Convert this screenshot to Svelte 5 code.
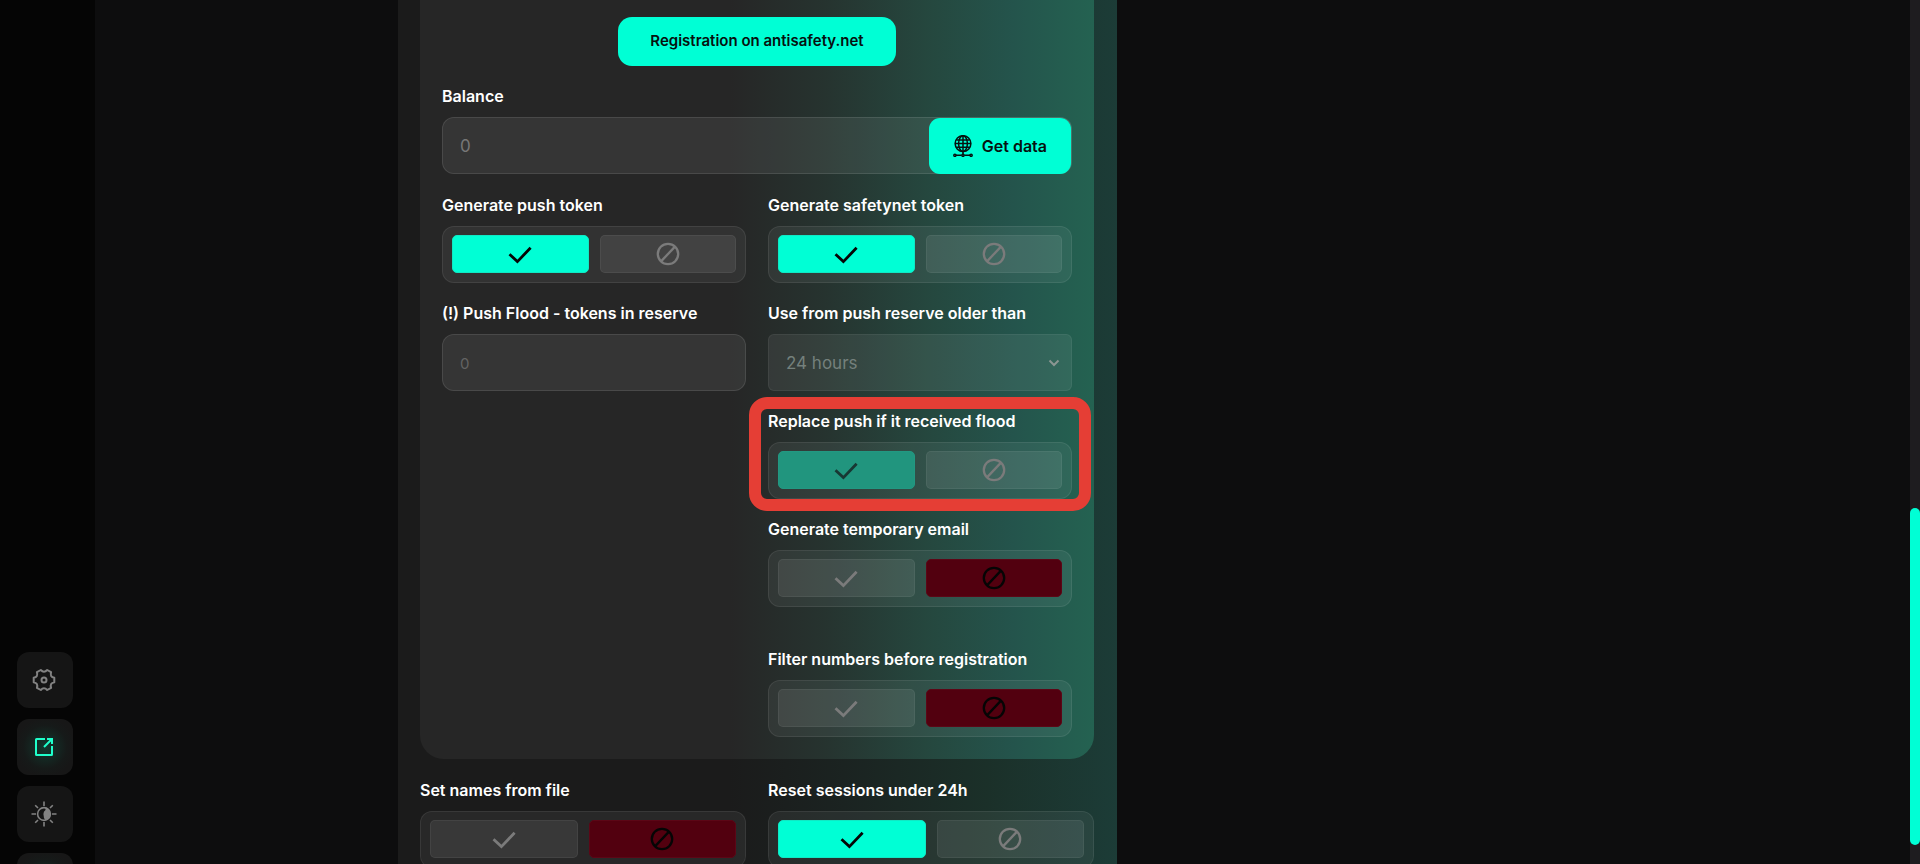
<script>
  let cardFields = $state([
    { id: "push-token", label: "Generate push token", type: "toggle", on: true },
    { id: "safetynet-token", label: "Generate safetynet token", type: "toggle", on: true },
    { id: "push-reserve", label: "(!) Push Flood - tokens in reserve", type: "number" },
    { id: "reserve-age", label: "Use from push reserve older than", type: "select" },
    { id: "replace-push", label: "Replace push if it received flood", type: "toggle", on: true, right: true, marked: true },
    { id: "temp-email", label: "Generate temporary email", type: "toggle", on: false, right: true },
    { id: "filter-numbers", label: "Filter numbers before registration", type: "toggle", on: false, right: true, spaced: true },
  ]);

  let panelFields = $state([
    { id: "names-file", label: "Set names from file", type: "toggle", on: false },
    { id: "reset-sessions", label: "Reset sessions under 24h", type: "toggle", on: true },
  ]);
</script>

{#snippet toggle(field)}
  <div class="field" class:right={field.right} class:spaced={field.spaced} class:marked={field.marked}>
    <span class="label" id="{field.id}-label">{field.label}</span>
    <div class="toggle" role="radiogroup" aria-labelledby="{field.id}-label">
      <label class="option yes">
        <input type="radio" name={field.id} checked={field.on} onchange={() => (field.on = true)} aria-label="On" />
        <svg width="24" height="24" viewBox="0 0 24 24" fill="none" stroke="currentColor" stroke-width="2.8">
          <path d="M1.5 12.2 9.4 19.6 22.6 5.8" />
        </svg>
      </label>
      <label class="option no">
        <input type="radio" name={field.id} checked={!field.on} onchange={() => (field.on = false)} aria-label="Off" />
        <svg width="24" height="24" viewBox="0 0 24 24" fill="none" stroke="currentColor" stroke-width="2.3">
          <circle cx="12" cy="12" r="10.2" />
          <path d="M5 19.4 19 4.6" />
        </svg>
      </label>
    </div>
  </div>
{/snippet}

<div class="app">
  <nav class="sidebar">
    <button class="nav-button" aria-label="Settings">
      <svg width="24" height="24" viewBox="0 0 24 24" fill="none" stroke="currentColor" stroke-width="2" stroke-linejoin="round">
        <path d="M22.3 9.8V14.2Q17.6 15.2 19.1 19.8L15.2 22Q12 18.5 8.8 22L4.9 19.8Q6.4 15.2 1.7 14.2V9.8Q6.4 8.8 4.9 4.2L8.8 2Q12 5.5 15.2 2L19.1 4.2Q17.6 8.8 22.3 9.8Z" />
        <circle cx="12" cy="12" r="2.5" />
      </svg>
    </button>
    <button class="nav-button active" aria-label="Registration">
      <svg width="20" height="20" viewBox="0 0 20 20" fill="none" stroke="currentColor" stroke-width="2">
        <path d="M11 2H2.5Q2 2 2 2.5V17.5Q2 18 2.5 18H17.5Q18 18 18 17.5V9" />
        <path d="M13 2H18V7M18 2 10 10" />
      </svg>
    </button>
    <button class="nav-button" aria-label="Theme">
      <svg width="26" height="26" viewBox="0 0 26 26" fill="none" stroke="currentColor" stroke-width="1.6">
        <circle cx="13" cy="13" r="6.4" />
        <path d="M14.5 6.6A6.6 6.6 0 0 1 14.5 19.4Q12.4 17 12.4 13Q12.4 10.5 14.5 9Z" fill="currentColor" stroke="none" />
        <path d="M13 .5V5M13 21V25.5M.5 13H5M21 13H25.5M4.2 4.2 7 7M19 19 21.8 21.8M4.2 21.8 7 19M19 7 21.8 4.2" />
      </svg>
    </button>
    <button class="nav-button active" aria-label="More"></button>
  </nav>

  <main>
    <div class="panel">
      <section class="card">
        <a class="register" href="https://antisafety.net">Registration on antisafety.net</a>

        <div class="field">
          <label class="label" for="balance">Balance</label>
          <div class="balance">
            <input id="balance" placeholder="0" />
            <button class="get-data">
              <svg width="20" height="22" viewBox="0 0 20 22" fill="none" stroke="currentColor" stroke-width="1.5">
                <circle cx="10" cy="8.6" r="7.9" />
                <ellipse cx="10" cy="8.6" rx="4.4" ry="7.9" />
                <path d="M10 1V19M2 8.6H18M3.4 5H16.6M3.4 12.2H16.6M3 20.3H8.600M11.400 20.3H17" />
                <circle cx="1.9" cy="20.3" r="1.1" />
                <circle cx="10" cy="20.3" r="1.1" />
                <circle cx="18.1" cy="20.3" r="1.1" />
              </svg>
              Get data
            </button>
          </div>
        </div>

        <div class="fields">
          {#each cardFields as field (field.id)}
            {#if field.type === "toggle"}
              {@render toggle(field)}
            {:else if field.type === "number"}
              <div class="field">
                <label class="label" for={field.id}>{field.label}</label>
                <input class="reserve" id={field.id} placeholder="0" />
              </div>
            {:else}
              <div class="field">
                <label class="label" for={field.id}>{field.label}</label>
                <div class="select">
                  <select id={field.id}>
                    <option>24 hours</option>
                  </select>
                  <svg width="12" height="8" viewBox="0 0 12 8" fill="none" stroke="currentColor" stroke-width="2">
                    <path d="M1.5 1.5 6 6 10.5 1.5" />
                  </svg>
                </div>
              </div>
            {/if}
          {/each}
        </div>
      </section>

      <div class="fields">
        {#each panelFields as field (field.id)}
          {@render toggle(field)}
        {/each}
      </div>
    </div>
  </main>

  <div class="scrollbar"><div class="thumb"></div></div>
</div>

<style>
  :global(body) {
    background: #0d0d0e;
  }

  .app {
    display: flex;
    height: 100vh;
    overflow: hidden;
    color: #fff;
    font-family: Inter, "Noto Sans", sans-serif;
    font-size: 16px;
  }
  .app * {
    box-sizing: border-box;
  }
  svg {
    flex: none;
  }

  .sidebar {
    flex: none;
    width: 95px;
    padding-left: 17px;
    display: flex;
    flex-direction: column;
    justify-content: flex-end;
    gap: 11px;
    background: #050505;
  }
  .nav-button {
    flex: none;
    width: 56px;
    height: 56px;
    padding: 0 2px 0 0;
    display: flex;
    align-items: center;
    justify-content: center;
    border: 0;
    border-radius: 12px;
    background: #151515;
    color: #828282;
  }
  .nav-button:last-child {
    margin-bottom: -45px;
  }
  .nav-button.active {
    background: radial-gradient(circle, #12382e 0, #161a19 55%, #171717 75%);
    color: #1fffcb;
  }

  main {
    flex: 1;
    min-width: 0;
    display: grid;
    grid-template-columns: 303fr 719fr 793fr;
  }
  .panel {
    grid-column: 2;
    padding: 0 23px 0 22px;
    background: linear-gradient(90deg, #1b1b1b 46%, #1b2321 62%, #1b3029 82%, #1c3c37);
  }
  .card {
    padding: 17px 22px 22px;
    display: flex;
    flex-direction: column;
    border-radius: 0 0 24px 24px;
    background: linear-gradient(90deg, #262626 46%, #26332f 60%, #25483f 76%, #24544c 88%, #246251);
  }

  .register {
    align-self: center;
    padding: 14px 32px 15px;
    line-height: 20px;
    border-radius: 14px;
    background: #00ffd5;
    color: #06110f;
    font-size: 15px;
    font-weight: 600;
    text-decoration: none;
  }

  .fields {
    padding-top: 1px;
    display: grid;
    grid-template-columns: 1fr 1fr;
    column-gap: 22px;
  }
  .field {
    position: relative;
    min-width: 0;
  }
  .field.right {
    grid-column: 2;
  }
  .field.spaced {
    padding-top: 22px;
  }
  .label {
    display: block;
    padding: 20px 0 11px;
    line-height: 20px;
    font-weight: 600;
    white-space: nowrap;
  }

  input:not([type="radio"]),
  select {
    display: block;
    width: 100%;
    height: 57px;
    padding: 0 17px;
    border: 1px solid rgba(255, 255, 255, 0.1);
    border-radius: 12px;
    background: rgba(255, 255, 255, 0.07);
    color: #808080;
    font: inherit;
    font-size: 17px;
    appearance: none;
  }
  input::placeholder {
    color: #777;
    opacity: 1;
  }
  .reserve::placeholder {
    color: #636363;
    font-size: 15px;
  }

  .balance {
    position: relative;
  }
  .get-data {
    position: absolute;
    top: 1px;
    right: 1px;
    bottom: 0;
    padding: 0 24px;
    display: flex;
    align-items: center;
    gap: 9px;
    border: 0;
    border-radius: 11px;
    background: #00ffd5;
    color: #06110f;
    font: inherit;
    font-weight: 600;
  }

  .select {
    position: relative;
    color: #8b9692;
  }
  .select select {
    border-radius: 6px;
    border-color: rgba(255, 255, 255, 0.06);
    color: #74807c;
  }
  .select svg {
    position: absolute;
    right: 12px;
    top: 25px;
    pointer-events: none;
  }

  .toggle {
    height: 57px;
    padding: 8px 9px 9px;
    display: grid;
    grid-template-columns: 1fr 1fr;
    gap: 11px;
    border: 1px solid rgba(255, 255, 255, 0.08);
    border-radius: 12px;
    background: rgba(255, 255, 255, 0.06);
  }
  .option {
    display: flex;
    align-items: center;
    justify-content: center;
    border: 1px solid rgba(255, 255, 255, 0.06);
    border-radius: 5px;
    background: rgba(255, 255, 255, 0.08);
    color: #7b7b7b;
  }
  .option input {
    position: absolute;
    opacity: 0;
    margin: 0;
  }
  .option.yes:has(input:checked) {
    border-color: #10e8c4;
    background: #00ffd5;
    color: #050505;
  }
  .option.no:has(input:checked) {
    border-color: #5c0616;
    background: #52000f;
    color: #050505;
  }

  .marked .option.yes:has(input:checked) {
    border-color: #229882;
    background: #21957e;
    color: #183733;
  }
  .marked::after {
    content: "";
    position: absolute;
    inset: 6px -19px -12px;
    border: 12px solid #e53e35;
    border-radius: 18px;
    pointer-events: none;
  }

  .scrollbar {
    flex: none;
    width: 10px;
    padding-top: 508px;
    background: #1e1c1f;
  }
  .thumb {
    height: 337px;
    border-radius: 5px;
    background: #00ffd5;
  }
</style>
